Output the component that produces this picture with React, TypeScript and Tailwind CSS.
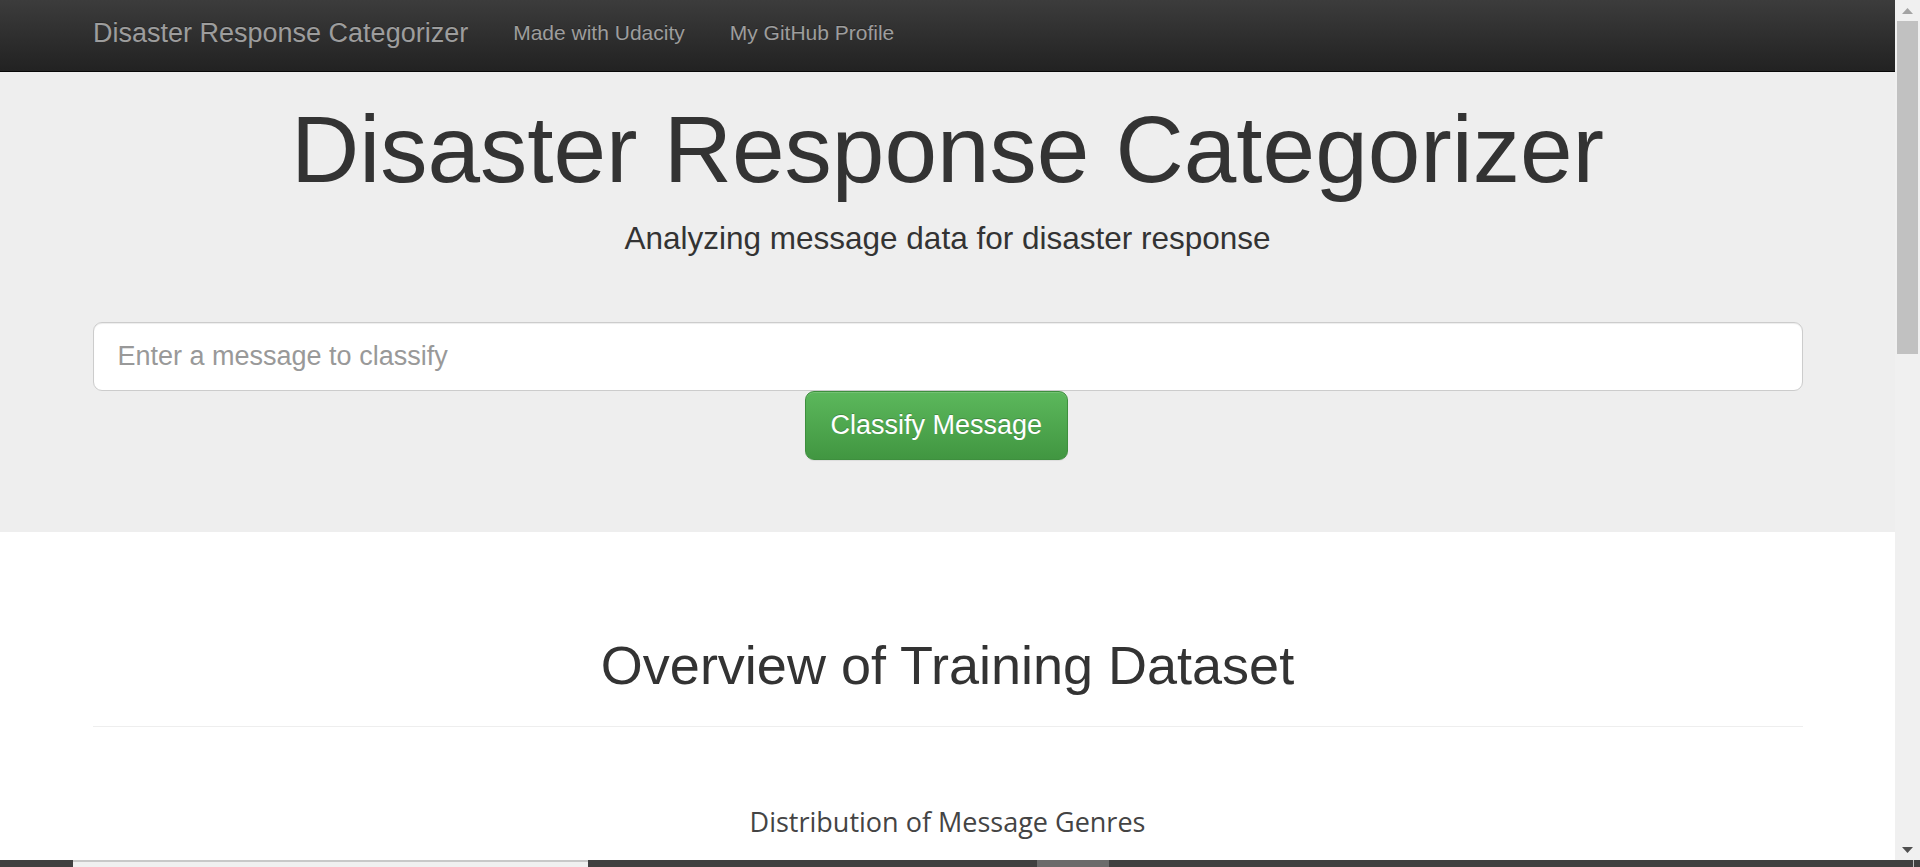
const sans = "font-['Liberation_Sans',Arial,sans-serif]";

function Navbar() {
  return (
    <nav className="h-[72px] shrink-0 border-b border-[#080808] bg-gradient-to-b from-[#3c3c3c] to-[#222]">
      <div className="flex items-start pl-[93px] text-[#9d9d9d]">
        <a className="pt-[18px] text-[27px] leading-[30px] [text-shadow:0_-1px_0_rgba(0,0,0,0.25)]">
          Disaster Response Categorizer
        </a>
        <a className="ml-[45px] pt-[21px] text-[21px] leading-[24px] [text-shadow:0_-1px_0_rgba(0,0,0,0.25)]">
          Made with Udacity
        </a>
        <a className="ml-[45px] pt-[21px] text-[21px] leading-[24px] [text-shadow:0_-1px_0_rgba(0,0,0,0.25)]">
          My GitHub Profile
        </a>
      </div>
    </nav>
  );
}

function Jumbotron() {
  return (
    <section className="shrink-0 bg-[#eee] pt-[25px] pb-[72px]">
      <div className="mx-auto w-[1710px] text-[#333]">
        <h1 className="text-center text-[94.5px] leading-[104px]">
          Disaster Response Categorizer
        </h1>
        <p className="mt-[19px] text-center text-[31.5px] leading-[36px]">
          Analyzing message data for disaster response
        </p>

        <form className="mt-[66px] flex flex-col items-start">
          <input
            type="text"
            placeholder="Enter a message to classify"
            className="h-[69px] w-full rounded-[9px] border border-[#ccc] bg-white px-[24px] text-[27px] text-[#555] shadow-[inset_0_1px_1px_rgba(0,0,0,0.075)] outline-none placeholder:text-[#999]"
          />
          <button
            type="button"
            className="ml-[712px] h-[69px] rounded-[9px] border border-[#3e8f3e] bg-gradient-to-b from-[#5cb85c] to-[#419641] px-[25px] text-[27px] text-white shadow-[inset_0_1px_0_rgba(255,255,255,0.15),0_1px_1px_rgba(0,0,0,0.075)] [text-shadow:0_-1px_0_rgba(0,0,0,0.2)]"
          >
            Classify Message
          </button>
        </form>
      </div>
    </section>
  );
}

function Overview() {
  return (
    <section className="mx-auto w-[1710px] pt-[104px]">
      <h1 className="text-center text-[54px] leading-[59px] text-[#333]">
        Overview of Training Dataset
      </h1>
      <hr className="mt-[31px] border-t border-[#eee]" />
      <div className="pt-[79px] text-center font-['Open_Sans',Verdana,sans-serif] text-[27px] leading-[31px] text-[#444]">
        Distribution of Message Genres
      </div>
    </section>
  );
}

function Scrollbar() {
  return (
    <div className="flex w-[25px] shrink-0 flex-col bg-[#f0f0f0]">
      <div className="flex h-[21px] items-center justify-center">
        <svg width="11" height="6" viewBox="0 0 11 6">
          <path d="M0 6 L5.5 0 L11 6 Z" fill="#a3a3a3" />
        </svg>
      </div>
      <div className="ml-[2px] h-[333px] w-[21px] bg-[#c1c1c1]" />
      <div className="flex-1" />
      <div className="flex h-[21px] items-center justify-center">
        <svg width="11" height="6" viewBox="0 0 11 6">
          <path d="M0 0 L11 0 L5.5 6 Z" fill="#505050" />
        </svg>
      </div>
    </div>
  );
}

function BottomStrip() {
  return (
    <div className="flex h-[7px] shrink-0 bg-[#404040]">
      <div className="w-[73px]" />
      <div className="w-[515px] border-t-2 border-[#c8c8c8] bg-[#f0f0f0]" />
      <div className="w-[449px]" />
      <div className="w-[72px] bg-[#6b6b6b]" />
      <div className="flex-1" />
      <div className="mr-[6px] w-px bg-[#bdbdbd]" />
    </div>
  );
}

export default function App() {
  return (
    <div className={`flex h-[867px] w-[1920px] flex-col overflow-hidden bg-white ${sans}`}>
      <div className="flex min-h-0 flex-1">
        <main className="flex min-w-0 flex-1 flex-col overflow-hidden">
          <Navbar />
          <Jumbotron />
          <Overview />
        </main>
        <Scrollbar />
      </div>
      <BottomStrip />
    </div>
  );
}
